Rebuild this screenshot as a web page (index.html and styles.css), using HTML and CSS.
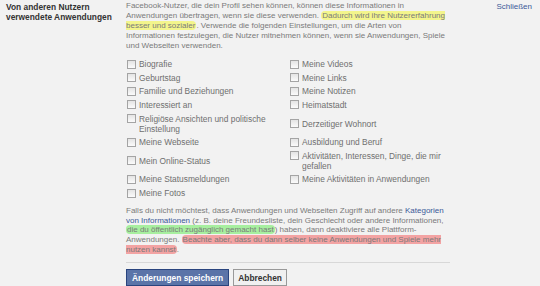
FILE: index.html
```html
<!DOCTYPE html>
<html lang="de">
<head>
    <meta charset="UTF-8">
    <title>Von anderen Nutzern verwendete Anwendungen</title>
    <link rel="stylesheet" href="styles.css">
</head>
<body>

<div class="section">
    <div class="label">Von anderen Nutzern verwendete Anwendungen</div>

    <div class="content">
        <p class="intro">
            Facebook-Nutzer, die dein Profil sehen können, können diese Informationen in
            Anwendungen übertragen, wenn sie diese verwenden.
            <span class="mark yellow">Dadurch wird ihre Nutzererfahrung besser und sozialer</span>.
            Verwende die folgenden Einstellungen, um die Arten von Informationen festzulegen,
            die Nutzer mitnehmen können, wenn sie Anwendungen, Spiele und Webseiten verwenden.
        </p>

        <div class="options">
            <label class="opt"><span class="box"></span><span>Biografie</span></label>
            <label class="opt"><span class="box"></span><span>Meine Videos</span></label>
            <label class="opt"><span class="box"></span><span>Geburtstag</span></label>
            <label class="opt"><span class="box"></span><span>Meine Links</span></label>
            <label class="opt"><span class="box"></span><span>Familie und Beziehungen</span></label>
            <label class="opt"><span class="box"></span><span>Meine Notizen</span></label>
            <label class="opt"><span class="box"></span><span>Interessiert an</span></label>
            <label class="opt"><span class="box"></span><span>Heimatstadt</span></label>
            <label class="opt"><span class="box"></span><span>Religiöse Ansichten und politische Einstellung</span></label>
            <label class="opt"><span class="box"></span><span>Derzeitiger Wohnort</span></label>
            <label class="opt"><span class="box"></span><span>Meine Webseite</span></label>
            <label class="opt"><span class="box"></span><span>Ausbildung und Beruf</span></label>
            <label class="opt"><span class="box"></span><span>Mein Online-Status</span></label>
            <label class="opt"><span class="box"></span><span>Aktivitäten, Interessen, Dinge, die mir gefallen</span></label>
            <label class="opt"><span class="box"></span><span>Meine Statusmeldungen</span></label>
            <label class="opt"><span class="box"></span><span>Meine Aktivitäten in Anwendungen</span></label>
            <label class="opt"><span class="box"></span><span>Meine Fotos</span></label>
        </div>

        <p class="outro">
            Falls du nicht möchtest, dass Anwendungen und Webseiten Zugriff auf andere
            <a href="#">Kategorien von Informationen</a> (z. B. deine Freundesliste, dein Geschlecht oder andere Informationen,
            <span class="mark green">die du öffentlich zugänglich gemacht hast</span>) haben, dann deaktiviere alle Plattform-Anwendungen.
            <span class="mark red">Beachte aber, dass du dann selber keine Anwendungen und Spiele mehr nutzen kannst</span>.
        </p>

        <div class="actions">
            <button class="btn primary">Änderungen speichern</button>
            <button class="btn">Abbrechen</button>
        </div>
    </div>

    <a class="close" href="#">Schließen</a>
</div>

</body>
</html>
```

FILE: styles.css
```css
body {
    margin: 0;
    background: #f2f2f2;
    font-family: "Liberation Sans", Arial, sans-serif;
    font-size: 8px;
    color: #7a7a7a;
}

a {
    color: #3b5998;
    text-decoration: none;
}

.section {
    display: flex;
    padding: 1px 0 0 6px;
}

/* left column title */
.label {
    flex: none;
    width: 116px;
    margin-right: 4px;
    padding-top: 2px;
    font-size: 8.4px;
    font-weight: bold;
    line-height: 9.5px;
    color: #333;
}

.content {
    flex: none;
    width: 324px;
}

.close {
    margin-left: auto;
    padding: 1px 8px 0 0;
    line-height: 10px;
}

p {
    margin: 0;
    line-height: 10px;
}

.outro {
    line-height: 9.6px;
}

.mark {
    padding: 0 1px;
    border-radius: 4px;
}

.yellow { background: #f3f58c; }
.green  { background: #a7ef9f; }
.red    { background: #f3a3a3; }

/* checkbox list, two columns */
.options {
    display: grid;
    grid-template-columns: 163px 160px;
    align-items: center;
    row-gap: 3.65px;
    margin: 8px 0 8px 1px;
}

.opt {
    display: flex;
    align-items: flex-start;
    gap: 3px;
    line-height: 10px;
    font-size: 8.4px;
    color: #6f6f6f;
}

.box {
    flex: none;
    box-sizing: border-box;
    width: 9px;
    height: 9px;
    margin-top: 0.5px;
    border: 1px solid #a4a4a4;
    background: linear-gradient(#e4e4e4, #fbfbfb);
}

.actions {
    display: flex;
    gap: 4px;
    margin-top: 8px;
    padding-top: 6px;
    border-top: 1px solid #d8d8d8;
}

.btn {
    height: 17px;
    padding: 0 4px;
    font-family: "Liberation Sans", Arial, sans-serif;
    font-size: 8.4px;
    font-weight: bold;
    border: 1px solid #999;
    background: #f0f0f0;
    color: #333;
}

.btn.primary {
    padding: 0 5px;
    border-color: #29447e;
    background: #5b74a8;
    color: #fff;
}
```
